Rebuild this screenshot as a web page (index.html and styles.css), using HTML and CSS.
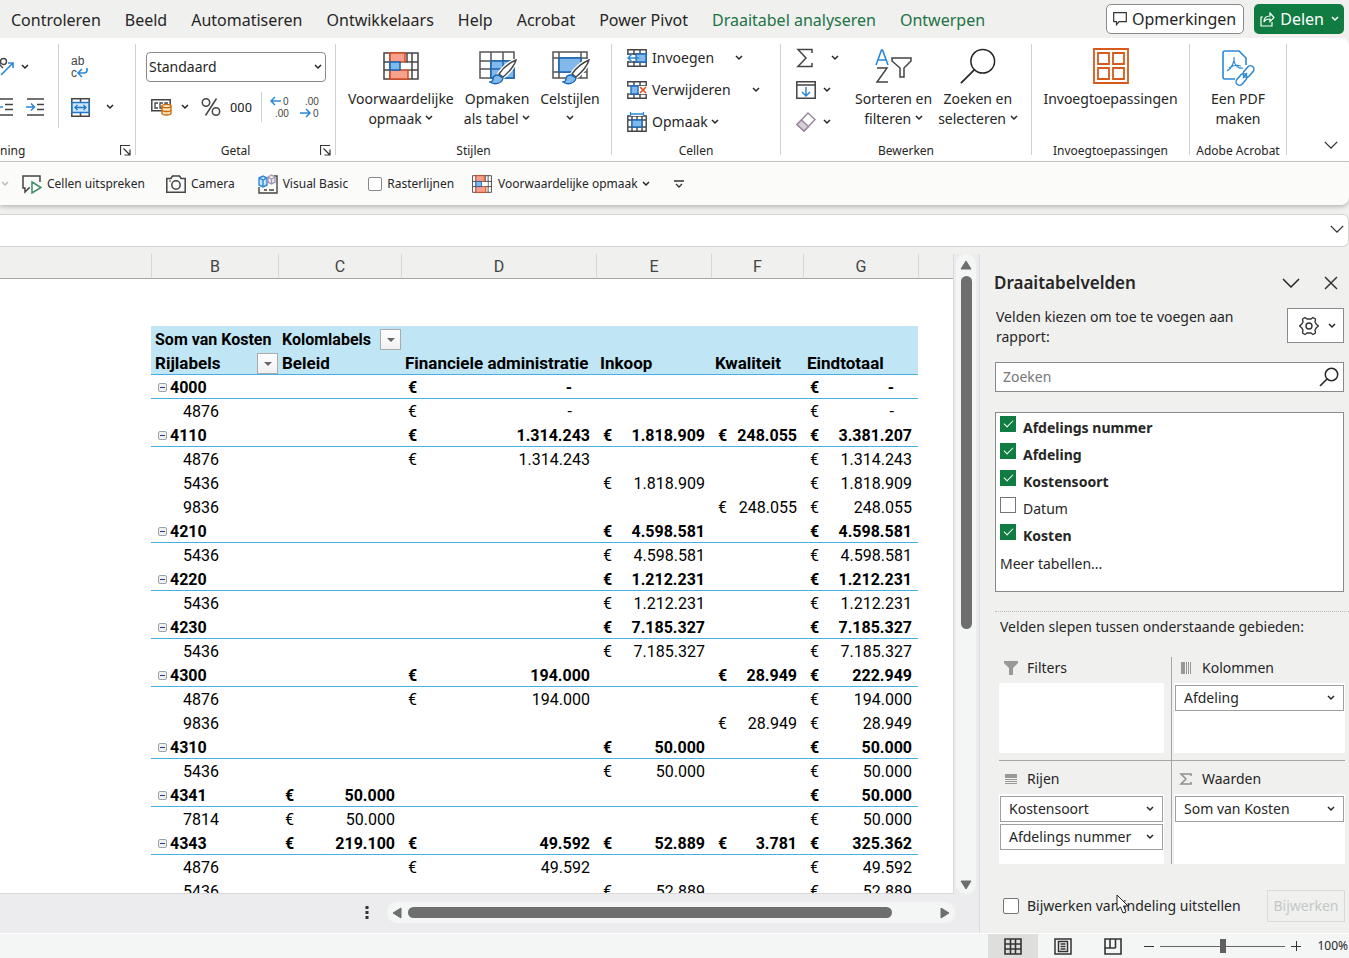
FILE: index.html
```html
<!DOCTYPE html>
<html lang="nl">
<head>
<meta charset="utf-8">
<title>Draaitabel</title>
<link rel="stylesheet" href="styles.css">
</head>
<body>
<svg class="defs" aria-hidden="true">
  <symbol id="chev" viewBox="0 0 8 6"><path d="M1 1l3 3 3-3" fill="none" stroke="currentColor" stroke-width="1.5"/></symbol>
  <symbol id="bigchev" viewBox="0 0 18 10"><path d="M1 1l8 8 8-8" fill="none" stroke="currentColor" stroke-width="1.5"/></symbol>
  <symbol id="launch" viewBox="0 0 11 11"><path d="M.5 10V.5H10M3.500 3.500l6 6M10 4.500V10H4.500" fill="none" stroke="#333" stroke-width="1.200"/></symbol>
  <symbol id="cond" viewBox="0 0 36 28"><path d="M1 1h34v26H1zM1 10h34M1 18h34M7 1v26M24 1v26M29 1v26" fill="#fff" stroke="#444" stroke-width="1.500"/><path d="M7 1h15v9H7zM7 18h18v9H7z" fill="#f7a08e" stroke="#d9481c" stroke-width="1.500"/><path d="M7 10h10v8H7z" fill="#83b9ea" stroke="#1565b5" stroke-width="1.500"/><path d="M18 10.800h10v6.400H18z" fill="#fff"/></symbol>
  <symbol id="brush" viewBox="0 0 28 26"><path d="M27 1C20 4 14 9 10 15l4 3C20 13 25 8 27 1z" fill="#fff" stroke="#fff" stroke-width="4"/><path d="M27 1C20 4 14 9 10 15l4 3C20 13 25 8 27 1z" fill="#fff" stroke="#444" stroke-width="1.400"/><path d="M9 16c-4 0-5 2-5 4s-2 3-3 3c4 3 12 2 13-4z" fill="#83b9ea" stroke="#1565b5" stroke-width="1.400"/></symbol>
  <symbol id="zoomer" viewBox="0 0 38 38"><circle cx="24" cy="14" r="12.500" fill="none" stroke="currentColor" stroke-width="1.600"/><path d="M15 23L1 37" stroke="currentColor" stroke-width="1.800"/></symbol>
  <symbol id="lens" viewBox="0 0 20 20"><circle cx="12.500" cy="7.500" r="6.200" fill="none" stroke="currentColor" stroke-width="1.500"/><path d="M8 12L1 19" stroke="currentColor" stroke-width="1.600"/></symbol>
</svg>

<header class="tabs">
  <nav class="tablist">
    <a href="#">Controleren</a><a href="#">Beeld</a><a href="#">Automatiseren</a><a href="#">Ontwikkelaars</a><a href="#">Help</a><a href="#">Acrobat</a><a href="#">Power Pivot</a><a href="#" class="ctx">Draaitabel analyseren</a><a href="#" class="ctx">Ontwerpen</a>
  </nav>
  <button class="comments"><svg width="14" height="14" viewBox="0 0 14 14"><path d="M.7.700h12.600v9H6l-2.500 3V9.700H.7z" fill="none" stroke="#333" stroke-width="1.200"/></svg>Opmerkingen</button>
  <button class="share"><svg width="15" height="15" viewBox="0 0 15 15"><path d="M3 5H1v9h11v-4M4 10c0-4 2-6 6-6V1l4 4.500-4 4V7C7 7 5 8 4 10z" fill="none" stroke="#fff" stroke-width="1.200"/></svg>Delen<svg class="chev"><use href="#chev"/></svg></button>
</header>

<section class="ribbon">
  <div class="group g-align">
    <div class="body">
      <div class="pair">
        <button class="tool" aria-label="Afdrukstand"><svg width="14" height="20" viewBox="0 0 14 20"><circle cx="3.500" cy="4.500" r="3" fill="none" stroke="#444" stroke-width="1.400"/><path d="M0 8l3 3M0 5v3" stroke="#444" stroke-width="1.300"/><path d="M1 18L13 6M8 6h5v5" fill="none" stroke="#2b88d8" stroke-width="1.600"/></svg></button>
        <button class="tool" aria-label="Meer"><svg class="chev"><use href="#chev"/></svg></button>
        <button class="tool" aria-label="Inspringing verkleinen"><svg width="14" height="18" viewBox="0 0 14 18"><path d="M0 1h13M5 6.500h8M5 11.500h8M0 17h13" stroke="#444" stroke-width="1.500"/><path d="M0 9h3" stroke="#2b88d8" stroke-width="1.500"/></svg></button>
        <button class="tool" aria-label="Inspringing vergroten"><svg width="19" height="18" viewBox="0 0 19 18"><path d="M1 1h17M11 6.500h7M11 11.500h7M1 17h17" stroke="#444" stroke-width="1.500"/><path d="M0 9h8M5 5.500L8.500 9 5 12.500" fill="none" stroke="#2b88d8" stroke-width="1.500"/></svg></button>
      </div>
      <div class="pair wrap">
        <button class="tool" aria-label="Tekstterugloop"><svg width="20" height="26" viewBox="0 0 20 26"><text x="1" y="11" class="ic12">ab</text><text x="1" y="23" class="ic12">c</text><path d="M17 14v2q0 3-3 3H9M12 15l-4 4 4 4" fill="none" stroke="#2b88d8" stroke-width="1.600"/></svg></button><span></span>
        <button class="tool" aria-label="Samenvoegen"><svg width="19" height="19" viewBox="0 0 19 19"><path d="M.8.800h17.400v17.400H.8zM9.500 1v4M9.500 14v4" fill="#fff" stroke="#444" stroke-width="1.500"/><path d="M1 4.500h17v10H1z" fill="#cfe4f7" stroke="#1e78c8" stroke-width="1.500"/><path d="M4 9.500h11M6.500 7L4 9.500 6.500 12M12.500 7L15 9.500 12.500 12" fill="none" stroke="#1e78c8" stroke-width="1.300"/></svg></button>
        <button class="tool" aria-label="Meer samenvoegen"><svg class="chev"><use href="#chev"/></svg></button>
      </div>
    </div>
    <div class="caption start">ning<button class="launch" aria-label="Uitlijning"><svg width="11" height="11"><use href="#launch"/></svg></button></div>
  </div>

  <div class="group g-num">
    <div class="body column">
      <div class="selectbox"><select aria-label="Getalnotatie"><option>Standaard</option></select><svg class="chev"><use href="#chev"/></svg></div>
      <div class="numrow">
        <button class="tool" aria-label="Financiële notatie"><svg width="21" height="18" viewBox="0 0 21 18"><path d="M.8 1.800h18.400v11H.8z" fill="#fff" stroke="#444" stroke-width="1.500"/><path d="M7 5H4v5h3M12 5H9v5h2M17 5h-3v3" fill="none" stroke="#444" stroke-width="1.300"/><path d="M11 8v7.500c0 2 9 2 9 0V8z" fill="#fbe0b8" stroke="#c8690a" stroke-width="1.300"/><ellipse cx="15.500" cy="8" rx="4.500" ry="1.700" fill="#fbe0b8" stroke="#c8690a" stroke-width="1.300"/><path d="M11 12c0 2 9 2 9 0" fill="none" stroke="#c8690a" stroke-width="1.300"/></svg></button>
        <button class="tool" aria-label="Meer notaties"><svg class="chev"><use href="#chev"/></svg></button>
        <button class="tool pctbtn" aria-label="Procent"><svg width="20" height="20" viewBox="0 0 20 20"><circle cx="5" cy="5.500" r="3.700" fill="none" stroke="#444" stroke-width="1.500"/><circle cx="15" cy="14.500" r="3.700" fill="none" stroke="#444" stroke-width="1.500"/><path d="M15.500 1.500L4.500 18.500" stroke="#444" stroke-width="1.500"/></svg></button>
        <button class="tool zeros">000</button>
        <i class="rule"></i>
        <button class="tool" aria-label="Meer decimalen"><svg width="21" height="26" viewBox="0 0 21 26"><text x="13" y="11" class="ic10">0</text><text x="5" y="23" class="ic10">.00</text><path d="M11 7H1M5 3L1 7l4 4" fill="none" stroke="#2b88d8" stroke-width="1.500"/></svg></button>
        <button class="tool" aria-label="Minder decimalen"><svg width="21" height="26" viewBox="0 0 21 26"><text x="5" y="11" class="ic10">.00</text><text x="13" y="23" class="ic10">0</text><path d="M0 19h10M6 15l4 4-4 4" fill="none" stroke="#2b88d8" stroke-width="1.500"/></svg></button>
      </div>
    </div>
    <div class="caption">Getal<button class="launch" aria-label="Getalinstellingen"><svg width="11" height="11"><use href="#launch"/></svg></button></div>
  </div>

  <div class="group g-style">
    <div class="body bigs">
      <button class="big"><svg width="36" height="36" viewBox="0 -4 36 36"><use href="#cond" width="36" height="28"/></svg><span>Voorwaardelijke<br>opmaak <svg class="chev"><use href="#chev"/></svg></span></button>
      <button class="big"><svg class="spill" width="36" height="36" viewBox="0 0 36 36"><path d="M1 4h34v26H1zM1 13h34M1 21h34M12 4v26M24 4v26" fill="#fff" stroke="#555" stroke-width="1.500"/><path d="M12 13h23v17H12z" fill="#83b9ea" stroke="#1565b5" stroke-width="1.500"/><path d="M24 13v17M12 21h23" stroke="#1565b5" stroke-width="1.500"/><use href="#brush" x="10" y="11" width="28" height="26"/></svg><span>Opmaken<br>als tabel <svg class="chev"><use href="#chev"/></svg></span></button>
      <button class="big"><svg class="spill" width="36" height="36" viewBox="0 0 36 36"><path d="M1 4h34v26H1zM1 10h34M1 24h34M7 4v26M29 4v26" fill="#fff" stroke="#555" stroke-width="1.500"/><path d="M7 10h22v14H7z" fill="#83b9ea" stroke="#1565b5" stroke-width="1.500"/><use href="#brush" x="10" y="11" width="28" height="26"/></svg><span>Celstijlen<br><svg class="chev"><use href="#chev"/></svg></span></button>
    </div>
    <div class="caption">Stijlen</div>
  </div>

  <div class="group g-cells">
    <div class="body column rows">
      <button class="row wide"><svg width="20" height="18" viewBox="0 0 20 18"><path d="M.8.800h18.400v16.400H.8zM1 5h18M1 13h18M7 1v16M13 1v16" fill="#fff" stroke="#444" stroke-width="1.400"/><path d="M0 6h10v6H0z" fill="#fff"/><path d="M9 5h10v8H9z" fill="#83b9ea" stroke="#1e6fc0" stroke-width="1.400"/><path d="M12 9H1M5 5L1 9l4 4" fill="none" stroke="#2b88d8" stroke-width="1.500"/></svg>Invoegen<svg class="chev"><use href="#chev"/></svg></button>
      <button class="row wide"><svg width="20" height="18" viewBox="0 0 20 18"><path d="M.8.800h18.400v16.400H.8zM1 5h18M1 13h18M7 1v16M13 1v16" fill="#fff" stroke="#444" stroke-width="1.400"/><path d="M12 5h8v8h-8zM0 5.700h4v6.600H0z" fill="#fff"/><path d="M4 5h7v8H4z" fill="#83b9ea" stroke="#1e6fc0" stroke-width="1.400"/><path d="M13 6l6 6M19 6l-6 6" stroke="#e0501c" stroke-width="1.600"/></svg>Verwijderen<svg class="chev"><use href="#chev"/></svg></button>
      <button class="row"><svg width="20" height="20" viewBox="0 0 20 20"><path d="M.8 4h18.400v15.200H.8zM1 8h18M1 15h18M5 4v15M15 4v15M10 4v15" fill="#fff" stroke="#444" stroke-width="1.400"/><path d="M5 8h10v7H5z" fill="#83b9ea" stroke="#1e6fc0" stroke-width="1.400"/><path d="M3 0h14v4H3z" fill="#fff"/><path d="M3.500 0v4M16.500 0v4M4 2h12" stroke="#2b88d8" stroke-width="1.300"/></svg>Opmaak<svg class="chev"><use href="#chev"/></svg></button>
    </div>
    <div class="caption">Cellen</div>
  </div>

  <div class="group g-edit">
    <div class="body">
      <div class="column rows">
        <button class="row sum" aria-label="AutoSom"><svg width="18" height="20" viewBox="0 0 18 20"><path d="M16 5V1.500H2l8 8.500-8 8.500h14V15" fill="none" stroke="#444" stroke-width="1.500"/></svg><svg class="chev"><use href="#chev"/></svg></button>
        <button class="row" aria-label="Doorvoeren"><svg width="20" height="18" viewBox="0 0 20 18"><path d="M.8.800h18.400v16.400H.8zM1 4h18" fill="#fff" stroke="#444" stroke-width="1.500"/><path d="M10 6v9M6 11l4 4 4-4" fill="none" stroke="#2b88d8" stroke-width="1.500"/></svg><svg class="chev"><use href="#chev"/></svg></button>
        <button class="row" aria-label="Wissen"><svg width="20" height="20" viewBox="0 0 20 20"><path d="M12 1l7 6.500L8 19l-7-6.500z" fill="#fff" stroke="#97869a" stroke-width="1.400"/><path d="M5.500 8l7 6.500L8 19l-7-6.500z" fill="#d6d0d6" stroke="#97869a" stroke-width="1.400"/></svg><svg class="chev"><use href="#chev"/></svg></button>
      </div>
      <div class="bigs">
        <button class="big"><svg width="38" height="36" viewBox="0 0 38 36"><path d="M1 17L6.500 2h1L13 17M3 12h8" fill="none" stroke="#2b88d8" stroke-width="1.600"/><path d="M2 20h10L2 34h11" fill="none" stroke="#444" stroke-width="1.500"/><path d="M17 10h19v3l-7 7v9h-4v-9l-8-7z" fill="none" stroke="#444" stroke-width="1.500"/></svg><span>Sorteren en<br>filteren <svg class="chev"><use href="#chev"/></svg></span></button>
        <button class="big"><svg width="38" height="36"><use href="#zoomer"/></svg><span>Zoeken en<br>selecteren <svg class="chev"><use href="#chev"/></svg></span></button>
      </div>
    </div>
    <div class="caption">Bewerken</div>
  </div>

  <div class="group g-addin">
    <div class="body bigs"><button class="big"><svg width="36" height="36" viewBox="0 0 36 36"><path d="M1 1h34v34H1zM5 5h11v11H5zM20 5h11v11H20zM5 20h11v11H5zM20 20h11v11H20z" fill="none" stroke="#d65a1c" stroke-width="1.800"/></svg><span>Invoegtoepassingen</span></button></div>
    <div class="caption">Invoegtoepassingen</div>
  </div>

  <div class="group g-pdf">
    <div class="body bigs"><button class="big"><svg class="spill pdf" width="34" height="36" viewBox="0 0 34 36"><path d="M14 31H4q-2 0-2-2V5q0-2 2-2h14l7 7v7" fill="none" stroke="#2b88d8" stroke-width="1.600"/><path d="M6 23c5-3 8-10 7-14M13 13c1 5 5 8 9 7M8 20c4-3 9-3 12-2" fill="none" stroke="#2b88d8" stroke-width="1.200"/><rect x="21" y="20" width="13" height="7" rx="3.500" transform="rotate(-50 27.500 23.500)" fill="none" stroke="#2b88d8" stroke-width="1.500"/><rect x="14" y="28" width="13" height="7" rx="3.500" transform="rotate(-50 20.500 31.500)" fill="none" stroke="#2b88d8" stroke-width="1.500"/><path d="M22 30l4-5" stroke="#2b88d8" stroke-width="1.500"/></svg><span>Een PDF<br>maken</span></button></div>
    <div class="caption">Adobe Acrobat</div>
  </div>
  <button class="collapse" aria-label="Lint samenvouwen"><svg width="14" height="8"><use href="#bigchev"/></svg></button>
</section>

<section class="qat">
  <svg class="chev faint"><use href="#chev"/></svg>
  <button class="q"><svg width="20" height="20" viewBox="0 0 20 20"><path d="M8 14H7l-4 4v-4H1V2h17v6" fill="none" stroke="#444" stroke-width="1.500"/><path d="M10 8l9 5.500-9 5.500z" fill="#fff" stroke="#3c8c68" stroke-width="1.500"/></svg>Cellen uitspreken</button>
  <button class="q cam"><svg width="20" height="18" viewBox="0 0 20 18"><path d="M.8 3.500H5l1.500-2.500h7L15 3.500h4.200v13.700H.8z" fill="none" stroke="#444" stroke-width="1.500"/><circle cx="10" cy="10" r="4.200" fill="none" stroke="#444" stroke-width="1.500"/><path d="M3 6h2" stroke="#444"/></svg>Camera</button>
  <button class="q vb"><svg width="20" height="20" viewBox="0 0 20 20"><path d="M1 13v6h18V2h-3M6 16h3M11 16h5" fill="none" stroke="#444" stroke-width="1.400"/><path d="M1 4l4-2 4 2v7l-4 2-4-2zM1 4l4 2 4-2M5 6v7" fill="#cfe4f7" stroke="#2b88d8" stroke-width="1.400"/><path d="M10 3l3.500-2L17 3v5l-3.500 2L10 8zM10 3l3.500 2L17 3M13.500 5v5" fill="#eee8f0" stroke="#a596ad" stroke-width="1.300"/></svg>Visual Basic</button>
  <label class="q grid-toggle"><input type="checkbox">Rasterlijnen</label>
  <button class="q cf"><svg width="20" height="18" viewBox="0 0 36 28" preserveAspectRatio="none"><use href="#cond" width="36" height="28"/></svg>Voorwaardelijke opmaak<svg class="chev"><use href="#chev"/></svg></button>
  <button class="q more" aria-label="Werkbalk aanpassen"><svg width="10" height="8" viewBox="0 0 10 8"><path d="M0 1h10M2 4l3 3 3-3" fill="none" stroke="#333" stroke-width="1.300"/></svg></button>
</section>

<section class="formula"><input type="text" aria-label="Formulebalk"><svg width="14" height="8"><use href="#bigchev"/></svg></section>

<main class="work">
  <section class="book">
    <div class="sheetrow">
      <div class="sheet">
        <table>
          <colgroup><col class="ca"><col class="cb"><col class="cc"><col class="cd"><col class="ce"><col class="cf2"><col class="cg"><col></colgroup>
          <thead><tr><th></th><th>B</th><th>C</th><th>D</th><th>E</th><th>F</th><th>G</th><th></th></tr></thead>
          <tbody>
            <tr class="gap"><td></td><td></td><td></td><td></td><td></td><td></td><td></td><td></td></tr>
            <tr class="head first"><td></td><td>Som van Kosten</td><td>Kolomlabels<button class="drop" aria-label="Kolomlabels filteren"></button></td><td></td><td></td><td></td><td></td><td></td></tr>
            <tr class="head under"><td></td><td>Rijlabels<button class="drop" aria-label="Rijlabels filteren"></button></td><td>Beleid</td><td>Financiele administratie</td><td>Inkoop</td><td>Kwaliteit</td><td>Eindtotaal</td><td></td></tr>
            <tr class="top"><td></td><td><button class="fold" aria-label="Samenvouwen"></button>4000</td><td></td><td class="m z"><i>€</i>-</td><td></td><td></td><td class="m z"><i>€</i>-</td><td></td></tr>
            <tr><td></td><td class="sub">4876</td><td></td><td class="m z"><i>€</i>-</td><td></td><td></td><td class="m z"><i>€</i>-</td><td></td></tr>
            <tr class="top"><td></td><td><button class="fold" aria-label="Samenvouwen"></button>4110</td><td></td><td class="m"><i>€</i>1.314.243</td><td class="m"><i>€</i>1.818.909</td><td class="m"><i>€</i>248.055</td><td class="m"><i>€</i>3.381.207</td><td></td></tr>
            <tr><td></td><td class="sub">4876</td><td></td><td class="m"><i>€</i>1.314.243</td><td></td><td></td><td class="m"><i>€</i>1.314.243</td><td></td></tr>
            <tr><td></td><td class="sub">5436</td><td></td><td></td><td class="m"><i>€</i>1.818.909</td><td></td><td class="m"><i>€</i>1.818.909</td><td></td></tr>
            <tr><td></td><td class="sub">9836</td><td></td><td></td><td></td><td class="m"><i>€</i>248.055</td><td class="m"><i>€</i>248.055</td><td></td></tr>
            <tr class="top"><td></td><td><button class="fold" aria-label="Samenvouwen"></button>4210</td><td></td><td></td><td class="m"><i>€</i>4.598.581</td><td></td><td class="m"><i>€</i>4.598.581</td><td></td></tr>
            <tr><td></td><td class="sub">5436</td><td></td><td></td><td class="m"><i>€</i>4.598.581</td><td></td><td class="m"><i>€</i>4.598.581</td><td></td></tr>
            <tr class="top"><td></td><td><button class="fold" aria-label="Samenvouwen"></button>4220</td><td></td><td></td><td class="m"><i>€</i>1.212.231</td><td></td><td class="m"><i>€</i>1.212.231</td><td></td></tr>
            <tr><td></td><td class="sub">5436</td><td></td><td></td><td class="m"><i>€</i>1.212.231</td><td></td><td class="m"><i>€</i>1.212.231</td><td></td></tr>
            <tr class="top"><td></td><td><button class="fold" aria-label="Samenvouwen"></button>4230</td><td></td><td></td><td class="m"><i>€</i>7.185.327</td><td></td><td class="m"><i>€</i>7.185.327</td><td></td></tr>
            <tr><td></td><td class="sub">5436</td><td></td><td></td><td class="m"><i>€</i>7.185.327</td><td></td><td class="m"><i>€</i>7.185.327</td><td></td></tr>
            <tr class="top"><td></td><td><button class="fold" aria-label="Samenvouwen"></button>4300</td><td></td><td class="m"><i>€</i>194.000</td><td></td><td class="m"><i>€</i>28.949</td><td class="m"><i>€</i>222.949</td><td></td></tr>
            <tr><td></td><td class="sub">4876</td><td></td><td class="m"><i>€</i>194.000</td><td></td><td></td><td class="m"><i>€</i>194.000</td><td></td></tr>
            <tr><td></td><td class="sub">9836</td><td></td><td></td><td></td><td class="m"><i>€</i>28.949</td><td class="m"><i>€</i>28.949</td><td></td></tr>
            <tr class="top"><td></td><td><button class="fold" aria-label="Samenvouwen"></button>4310</td><td></td><td></td><td class="m"><i>€</i>50.000</td><td></td><td class="m"><i>€</i>50.000</td><td></td></tr>
            <tr><td></td><td class="sub">5436</td><td></td><td></td><td class="m"><i>€</i>50.000</td><td></td><td class="m"><i>€</i>50.000</td><td></td></tr>
            <tr class="top"><td></td><td><button class="fold" aria-label="Samenvouwen"></button>4341</td><td class="m"><i>€</i>50.000</td><td></td><td></td><td></td><td class="m"><i>€</i>50.000</td><td></td></tr>
            <tr><td></td><td class="sub">7814</td><td class="m"><i>€</i>50.000</td><td></td><td></td><td></td><td class="m"><i>€</i>50.000</td><td></td></tr>
            <tr class="top"><td></td><td><button class="fold" aria-label="Samenvouwen"></button>4343</td><td class="m"><i>€</i>219.100</td><td class="m"><i>€</i>49.592</td><td class="m"><i>€</i>52.889</td><td class="m"><i>€</i>3.781</td><td class="m"><i>€</i>325.362</td><td></td></tr>
            <tr><td></td><td class="sub">4876</td><td></td><td class="m"><i>€</i>49.592</td><td></td><td></td><td class="m"><i>€</i>49.592</td><td></td></tr>
            <tr><td></td><td class="sub">5436</td><td></td><td></td><td class="m"><i>€</i>52.889</td><td></td><td class="m"><i>€</i>52.889</td><td></td></tr>
          </tbody>
        </table>
      </div>
      <div class="vscroll"><svg width="12" height="10" viewBox="0 0 12 10"><path d="M6 1l5 8H1z" fill="#6e6e6e" stroke="#6e6e6e" stroke-linejoin="round"/></svg><div class="vtrack"><div class="vthumb"></div></div><svg width="12" height="10" viewBox="0 0 12 10"><path d="M6 9L1 1h10z" fill="#6e6e6e" stroke="#6e6e6e" stroke-linejoin="round"/></svg></div>
    </div>
    <div class="hrow">
      <svg class="dots" width="4" height="14" viewBox="0 0 4 14"><path d="M.5 0h3v3h-3zM.5 5h3v3h-3zM.5 10h3v3h-3z" fill="#333"/></svg>
      <div class="hscroll"><svg width="10" height="12" viewBox="0 0 10 12"><path d="M1 6l8-5v10z" fill="#6e6e6e" stroke="#6e6e6e" stroke-linejoin="round"/></svg><div class="htrack"><div class="hthumb"></div></div><svg width="10" height="12" viewBox="0 0 10 12"><path d="M9 6L1 1v10z" fill="#6e6e6e" stroke="#6e6e6e" stroke-linejoin="round"/></svg></div>
    </div>
  </section>

  <aside class="pane">
    <div class="titlebar"><h2>Draaitabelvelden</h2><button aria-label="Opties"><svg width="18" height="10"><use href="#bigchev"/></svg></button><button aria-label="Sluiten"><svg width="14" height="14" viewBox="0 0 14 14"><path d="M1 1l12 12M13 1L1 13" stroke="#333" stroke-width="1.500"/></svg></button></div>
    <div class="intro"><p>Velden kiezen om toe te voegen aan rapport:</p><button class="gear" aria-label="Instellingen"><svg width="20" height="20" viewBox="0 0 20 20"><path d="M6 1.500L8 3h4l2-1.500 2.500 1.500-.5 3 1.300 2.200L19.500 10l-2.200 1.800L16 14l.5 3-2.500 1.500L12 17H8l-2 1.500L3.500 17l.5-3-1.300-2.200L.5 10l2.200-1.800L4 6l-.5-3z" fill="none" stroke="#333" stroke-width="1.400" stroke-linejoin="round"/><circle cx="10" cy="10" r="3" fill="none" stroke="#333" stroke-width="1.400"/></svg><svg class="chev"><use href="#chev"/></svg></button></div>
    <div class="search"><input type="text" placeholder="Zoeken" aria-label="Zoeken"><svg width="20" height="20"><use href="#lens"/></svg></div>
    <div class="fields">
      <label class="on"><input type="checkbox" checked><span>Afdelings nummer</span></label>
      <label class="on"><input type="checkbox" checked><span>Afdeling</span></label>
      <label class="on"><input type="checkbox" checked><span>Kostensoort</span></label>
      <label><input type="checkbox"><span>Datum</span></label>
      <label class="on"><input type="checkbox" checked><span>Kosten</span></label>
      <a href="#">Meer tabellen...</a>
    </div>
    <div class="areas-block">
      <p>Velden slepen tussen onderstaande gebieden:</p>
      <div class="areas">
        <section class="area"><h3><svg width="16" height="14" viewBox="0 0 16 14"><path d="M1 0h14v2L10 7v7H6V7L1 2z" fill="#999"/></svg>Filters</h3><div class="well"></div></section>
        <section class="area right"><h3><svg width="12" height="12" viewBox="0 0 12 12"><path d="M1 0h4v12H1zM6 0h1v12H6zM8 0h1v12H8zM10 0h1v12h-1z" fill="#999"/></svg>Kolommen</h3><div class="well"><button class="chip">Afdeling<svg class="chev"><use href="#chev"/></svg></button></div></section>
        <section class="area low"><h3><svg width="12" height="11" viewBox="0 0 12 11"><path d="M0 0h12v4H0zM0 5h12v1H0zM0 7h12v1H0zM0 9h12v1H0z" fill="#999"/></svg>Rijen</h3><div class="well"><button class="chip">Kostensoort<svg class="chev"><use href="#chev"/></svg></button><button class="chip">Afdelings nummer<svg class="chev"><use href="#chev"/></svg></button></div></section>
        <section class="area low right"><h3><svg width="12" height="12" viewBox="0 0 12 12"><path d="M11 3V1H1l5 5-5 5h10V9" fill="none" stroke="#909090" stroke-width="1.500"/></svg>Waarden</h3><div class="well"><button class="chip">Som van Kosten<svg class="chev"><use href="#chev"/></svg></button></div></section>
      </div>
    </div>
    <div class="defer"><label><input type="checkbox">Bijwerken van indeling uitstellen</label><button disabled>Bijwerken</button>
      <svg class="cursor" width="14" height="20" viewBox="0 0 14 20"><path d="M1 1v15l3.500-3 2.500 6 3-1-2.500-6H12z" fill="#fff" stroke="#222"/></svg>
    </div>
  </aside>
</main>

<footer class="status">
  <button class="view active" aria-label="Normaal"><svg width="18" height="17" viewBox="0 0 18 17"><path d="M1 1h16v15H1zM1 6h16M1 11h16M6.500 1v15M11.500 1v15" fill="none" stroke="#333" stroke-width="1.600"/></svg></button>
  <button class="view" aria-label="Pagina-indeling"><svg width="18" height="17" viewBox="0 0 18 17"><path d="M1 1h16v15H1zM4.500 3.500h9v10h-9zM6.500 6h5M6.500 8.500h5M6.500 11h5" fill="none" stroke="#333" stroke-width="1.500"/></svg></button>
  <button class="view" aria-label="Pagina-eindevoorbeeld"><svg width="18" height="17" viewBox="0 0 18 17"><path d="M1 1h16v15H1zM6 1v9M11.500 1v9M1 10h10.500" fill="none" stroke="#333" stroke-width="1.600"/></svg></button>
  <button class="step" aria-label="Uitzoomen"><svg width="10" height="10"><path d="M0 5.500h10" stroke="#333"/></svg></button>
  <input class="zoom" type="range" min="0" max="100" value="50" aria-label="Zoom">
  <button class="step" aria-label="Inzoomen"><svg width="10" height="10"><path d="M0 5.500h10M5.500 0v10" stroke="#333"/></svg></button>
  <span class="pct">100%</span>
</footer>
</body>
</html>
```

FILE: styles.css
```css
* { box-sizing: border-box; }
body {
  margin: 0;
  height: 100vh;
  display: flex;
  flex-direction: column;
  overflow: hidden;
  background: #f0f0ee;
  color: #262626;
  font: 14px/20px "Noto Sans", "Open Sans", sans-serif;
}
button, input, select { font: inherit; color: inherit; }
button { border: 0; background: none; padding: 0; margin: 0; }
a { color: inherit; text-decoration: none; }
h2, h3, p { margin: 0; font-weight: 400; }
svg { flex: none; display: block; }
.defs { position: absolute; width: 0; height: 0; }
.chev { width: 8px; height: 6px; }

/* Tabs */
.tabs { display: flex; align-items: center; height: 38px; padding: 0 5px 0 11px; font-size: 16px; white-space: nowrap; }
.tablist { display: flex; gap: 24px; flex: 1; padding-top: 2px; }
.tablist .ctx { color: #217346; }
.comments, .share { display: flex; align-items: center; gap: 5px; height: 30px; border-radius: 5px; }
.comments { background: #fff; border: 1px solid #8a8a8a; padding: 0 7px 0 6px; }
.share { background: #107c41; color: #fff; margin-left: 10px; padding: 0 5px 0 6px; }
.share .chev { margin-left: 2px; }

/* Ribbon */
.ribbon { display: flex; height: 124px; padding-top: 6px; background: #fff; border-bottom: 1px solid #c8c8c8; border-top-right-radius: 8px; }
.group { display: flex; flex-direction: column; flex: none; height: 111px; border-right: 1px solid #d0d0d0; }
.body { display: flex; flex: 1; }
.column { display: flex; flex-direction: column; }
.caption { position: relative; height: 14px; line-height: 20px; font-size: 12px; text-align: center; }
.caption.start { text-align: left; }
.launch { position: absolute; right: 4px; top: 4px; }
.g-align { width: 136px; }
.g-num { width: 200px; }
.g-style { width: 276px; }
.g-cells { width: 169px; }
.g-edit { width: 251px; }
.g-addin { width: 158px; }
.g-pdf { width: 97px; white-space: nowrap; }
.tool { display: grid; place-items: center; }
.pair { display: grid; grid-template: 40px 40px / 14px 1fr; width: 59px; height: 84px; padding: 3px 10px 0 0; border-right: 1px solid #d0d0d0; }
.pair .tool:nth-child(2) { justify-self: start; padding-left: 7px; }
.pair .tool:nth-child(4) { justify-self: end; padding-right: 3px; }
.pair.wrap { grid-template-columns: 30px 30px; width: 76px; padding: 3px 0 0 6px; border: 0; }
.pair.wrap .tool:nth-child(4) { justify-self: center; padding: 0; }
.ic12 { font: 12px "Liberation Sans", sans-serif; fill: #444; }
.ic10 { font: 10px "Liberation Sans", sans-serif; fill: #444; }
.g-num .body { padding: 8px 9px 0 10px; }
.selectbox { position: relative; }
.selectbox select { display: block; appearance: none; width: 100%; height: 30px; padding: 0 2px; border: 1px solid #8a8a8a; border-radius: 4px; background: #fff; }
.selectbox .chev { position: absolute; right: 4px; top: 12px; }
.numrow { display: flex; align-items: center; justify-content: space-between; height: 30px; margin-top: 10px; padding: 0 5px; }
.numrow .pctbtn { padding-left: 4px; }
.zeros { font: 13px Roboto, sans-serif; }
.rule { width: 1px; height: 30px; background: #d0d0d0; }
.bigs { display: flex; padding-top: 4px; }
.big { display: flex; flex-direction: column; align-items: center; gap: 5px; white-space: nowrap; }
.big > svg { height: 36px; }
.spill { overflow: visible; }
.big span .chev { display: inline-block; margin-bottom: 3px; }
.g-style .bigs { padding-left: 12px; gap: 10px; }
.rows { gap: 12px; padding-top: 4px; }
.row { display: flex; align-items: center; height: 20px; gap: 5px; }
.g-cells .rows { padding-left: 15px; align-items: flex-start; }
.g-cells .row .chev { margin-left: -2px; }
.g-cells .row.wide .chev { margin-left: 16px; }
.g-edit .rows { width: 74px; padding-left: 15px; }
.g-edit .row { gap: 7px; }
.g-edit .sum { gap: 17px; }
.g-edit .bigs { gap: 6px; }
.g-addin .bigs, .g-pdf .bigs { justify-content: center; }
.collapse { margin: 97px 11px auto auto; }

/* Quick access */
.qat { display: flex; align-items: center; height: 43px; background: #fbfbfa; border-radius: 0 0 8px 0; font-size: 12px; white-space: nowrap; box-shadow: 0 2px 4px rgba(0, 0, 0, .22); padding-left: 1px; }
.q { display: flex; align-items: center; gap: 5px; margin-left: 20px; }
.faint { color: #bbb; }
.faint + .q { margin-left: 13px; }
.q.cam { margin-left: 21px; }
.q.vb { margin-left: 23px; }
.q .chev { margin-left: -2px; }
.qat input { appearance: none; width: 14px; height: 14px; margin: 0; border: 1px solid #888; border-radius: 2px; background: #fff; }
.q.grid-toggle { margin-left: 20px; }
.q.cf { margin-left: 18px; gap: 6px; }
.q.more { margin-left: 24px; }

/* Formula bar */
.formula { display: flex; align-items: center; height: 33px; margin: 9px 0 7px; padding: 0 4px 4px 0; background: #fff; border: 1px solid #d4d4d2; border-left: 0; border-radius: 0 6px 6px 0; }
.formula input { flex: 1; border: 0; background: none; height: 100%; outline: 0; }

/* Workspace */
.work { display: flex; flex: 1; min-height: 0; }
.book { display: flex; flex-direction: column; flex: 1; min-width: 0; background: #ececee; }
.sheetrow { display: flex; flex: 1; min-height: 0; }
.sheet { flex: 1; min-width: 0; overflow: hidden; background: #fff; border-right: 1px solid #d8d8d8; border-bottom: 1px solid #d8d8d8; }
table { width: 100%; table-layout: fixed; border-collapse: separate; border-spacing: 0; font: 16px/21px Roboto, "Liberation Sans", sans-serif; color: #000; }
.ca { width: 151px; }
.cb { width: 127px; }
.cc { width: 123px; }
.cd { width: 195px; }
.ce { width: 115px; }
.cf2 { width: 92px; }
.cg { width: 115px; }
th { height: 25px; padding: 2px 0 0; background: #f0f0ee; border-bottom: 1px solid #a6a6a6; border-left: 1px solid #d6d6d4; font-weight: 400; color: #444; line-height: 22px; }
th:first-child { border-left: 0; }
td { height: 24px; padding: 2px 4px 0; white-space: nowrap; border-bottom: 1px solid transparent; }
.gap td { height: 47px; }
.head, .top { font-weight: 700; }
.head td:nth-child(n+2):nth-child(-n+7) { background: #c0e6f5; border-bottom-color: #c0e6f5; }
.first td { height: 25px; padding-top: 3px; }
.under td { font-size: 17px; }
.under td:nth-child(n+2):nth-child(-n+7), .top td:nth-child(n+2):nth-child(-n+7) { border-bottom-color: #45b0e1; }
.drop { float: right; width: 21px; height: 21px; margin-right: -4px; border: 1px solid #ababab; background: linear-gradient(#fff, #f0f0f0); display: grid; place-items: center; }
.drop::after { content: ""; border: 4px solid transparent; border-top-color: #666; border-bottom: 0; }
.fold { display: inline-grid; place-items: center; width: 9px; height: 9px; margin: 0 3px 3px; vertical-align: middle; border: 1px solid #9aa5a5; border-radius: 2px; background: #eef0f2; }
.fold::after { content: ""; width: 5px; height: 1px; background: #2b3c8c; }
td.sub { padding-left: 32px; }
td.m { text-align: right; padding: 2px 6px 0 7px; }
.m i { float: left; font-style: normal; }
td.z { padding-right: 24px; }
.vscroll { display: flex; flex-direction: column; align-items: center; width: 20px; margin: 0 3px 0 2px; padding: 6px 0 4px; gap: 6px; border-radius: 10px; background: #f4f6f5; }
.vtrack { flex: 1; width: 11px; }
.vthumb { height: 59%; border-radius: 6px; background: #6e6e6e; }
.hrow { display: flex; align-items: center; height: 39px; padding-bottom: 2px; }
.dots { margin-left: 365px; }
.hscroll { display: flex; align-items: center; flex: 1; height: 21px; margin: 0 24px 0 18px; padding: 0 5px; gap: 6px; border-radius: 10px; background: #f4f6f5; }
.htrack { flex: 1; }
.hthumb { width: 92%; height: 11px; border-radius: 6px; background: #6e6e6e; }

/* Field pane */
.pane { width: 370px; padding: 16px 5px 0 14px; border-left: 1px solid #dcdcdc; }
.titlebar { display: flex; align-items: center; gap: 24px; height: 26px; padding-right: 6px; }
.titlebar h2 { flex: 1; font-size: 17px; font-weight: 600; line-height: 26px; }
.intro { display: flex; justify-content: space-between; align-items: flex-start; padding: 11px 0 15px 2px; }
.intro p { width: 260px; }
.gear { display: flex; align-items: center; justify-content: center; gap: 9px; width: 57px; height: 35px; margin-top: 1px; padding-left: 4px; border: 1px solid #8a8a8a; background: #fff; }
.search { display: flex; align-items: center; height: 30px; margin-left: 1px; padding: 0 4px 0 3px; border: 1px solid #8a8a8a; background: #fff; }
.search input { flex: 1; min-width: 0; border: 0; outline: 0; padding: 0 4px 2px; height: 26px; background: none; }
.search input::placeholder { color: #777; }
.fields { display: flex; flex-direction: column; height: 180px; margin: 20px 0 0 1px; padding: 3px 4px; border: 1px solid #8a8a8a; background: #fff; }
.fields label { display: flex; gap: 7px; height: 27px; }
.fields span { padding-top: 2px; }
.fields .on { font-weight: 700; }
.fields a { margin-top: 3px; }
.fields input, .defer input { appearance: none; display: grid; place-items: center; flex: none; width: 16px; height: 16px; margin: 0; border: 1px solid #767676; background: #fff; }
.fields input:checked { background: #107c41; border-color: #107c41; }
.fields input:checked::after { content: ""; width: 8px; height: 4px; margin-bottom: 3px; border: solid #fff; border-width: 0 0 1px 1px; transform: rotate(-45deg); }
.areas-block { margin: 19px -5px 0 1px; padding: 5px 4px 0; border-top: 1px dotted #bbb; }
.areas-block > p { padding-left: 1px; }
.areas { display: grid; grid-template-columns: 172px 1fr; margin-top: 20px; }
.area { padding: 0 7px 7px 0; }
.area.right { padding-right: 0; padding-left: 2px; border-left: 1px solid #a6a6a6; }
.area.low { border-top: 1px solid #a6a6a6; padding-top: 7px; padding-bottom: 0; }
.area h3 { display: flex; align-items: center; gap: 8px; height: 26px; padding: 0 0 4px 4px; font-size: 14px; }
.area h3 svg { width: 16px; }
.area .well { height: 70px; padding: 2px 1px; background: #fff; display: flex; flex-direction: column; gap: 2px; }
.chip { display: flex; justify-content: space-between; align-items: center; height: 26px; padding: 0 8px; border: 1px solid #a0a0a0; background: #fff; }
.defer { position: relative; display: flex; justify-content: space-between; align-items: center; margin: 26px -1px 0 9px; }
.defer label { display: flex; align-items: center; gap: 8px; }
.defer input { border-radius: 2px; }
.defer button { height: 32px; width: 78px; border: 1px solid #dadada; color: #c2c8c8; }
.cursor { position: absolute; left: 113px; top: 4px; }

/* Status bar */
.status { display: flex; align-items: center; justify-content: flex-end; height: 25px; background: #f4f6f5; border-top: 1px solid #fff; }
.view { display: grid; place-items: center; width: 50px; height: 100%; }
.view.active { background: #dededd; }
.step { margin: 0 6px; }
.zoom { appearance: none; width: 125px; height: 14px; margin: 0; background: linear-gradient(#666, #666) center / 100% 1px no-repeat; }
.zoom::-webkit-slider-thumb { appearance: none; width: 6px; height: 14px; background: #606060; }
.pct { margin: 0 1px 0 10px; font-size: 12px; }
```
